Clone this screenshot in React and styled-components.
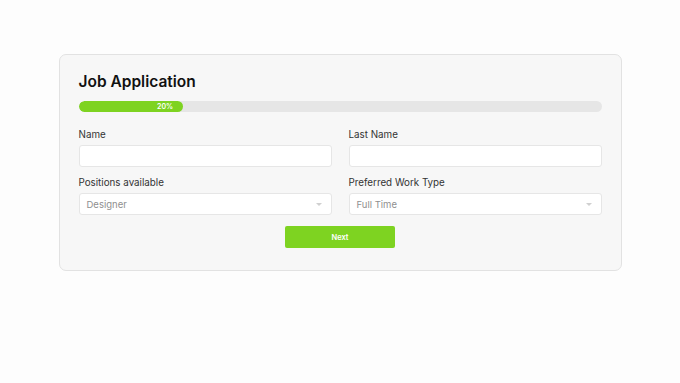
import React from "react";
import styled, { createGlobalStyle } from "styled-components";

const Global = createGlobalStyle`
  html, body { margin: 0; padding: 0; background: #fdfdfd; }
  body { font-family: Inter, "Noto Sans", "Liberation Sans", sans-serif; }
  * { box-sizing: border-box; }
`;

const Page = styled.div`
  width: 680px;
  height: 383px;
  padding-top: 54px;
  display: flex;
  justify-content: center;
  align-items: flex-start;
`;

const Card = styled.form`
  width: 563px;
  background: #f7f7f7;
  border: 1px solid #e2e2e2;
  border-radius: 7px;
  padding: 16px 19px 22px;
  display: flex;
  flex-direction: column;
`;

const Title = styled.h1`
  margin: 0;
  font-size: 15.5px;
  line-height: 22px;
  font-weight: 600;
  color: #111;
  letter-spacing: 0px;
`;

const Track = styled.div`
  margin-top: 8px;
  height: 11px;
  border-radius: 6px;
  background: #e6e6e6;
  overflow: hidden;
`;

const Fill = styled.div`
  height: 100%;
  background: #7ed321;
  border-radius: 6px;
  display: flex;
  align-items: center;
  justify-content: flex-end;
  padding-right: 10px;
  color: #fff;
  font-size: 7px;
  font-weight: 600;
`;

const Grid = styled.div`
  margin-top: 16px;
  display: grid;
  grid-template-columns: 1fr 1fr;
  column-gap: 17px;
  row-gap: 9px;
`;

const Field = styled.div`
  display: flex;
  flex-direction: column;
`;

const Label = styled.label`
  font-size: 9.8px;
  line-height: 14px;
  color: #333;
  margin-bottom: 3px;
`;

const Input = styled.div`
  height: 22px;
  background: #fff;
  border: 1px solid #e6e6e6;
  border-radius: 3px;
  display: flex;
  align-items: center;
  justify-content: space-between;
  padding: 0 7px;
  font-size: 9.5px;
  color: #8f8f8f;
`;

const Caret = styled.span`
  width: 0;
  height: 0;
  border-left: 3px solid transparent;
  border-right: 3px solid transparent;
  border-top: 3px solid #d0d0d0;
  margin-right: 2px;
`;

const Actions = styled.div`
  margin-top: 11px;
  display: flex;
  justify-content: center;
`;

const Button = styled.button`
  width: 110px;
  height: 22px;
  border: none;
  border-radius: 2px;
  background: #7ed321;
  color: #fff;
  font-family: inherit;
  font-size: 7.5px;
  font-weight: 600;
  cursor: pointer;
`;

export default function App() {
  const progress = 20;
  return (
    <>
      <Global />
      <Page>
        <Card onSubmit={(e) => e.preventDefault()}>
          <Title>Job Application</Title>
          <Track>
            <Fill style={{ width: `${progress}%` }}>{progress}%</Fill>
          </Track>
          <Grid>
            <Field>
              <Label>Name</Label>
              <Input />
            </Field>
            <Field>
              <Label>Last Name</Label>
              <Input />
            </Field>
            <Field>
              <Label>Positions available</Label>
              <Input>
                Designer
                <Caret />
              </Input>
            </Field>
            <Field>
              <Label>Preferred Work Type</Label>
              <Input>
                Full Time
                <Caret />
              </Input>
            </Field>
          </Grid>
          <Actions>
            <Button type="submit">Next</Button>
          </Actions>
        </Card>
      </Page>
    </>
  );
}
